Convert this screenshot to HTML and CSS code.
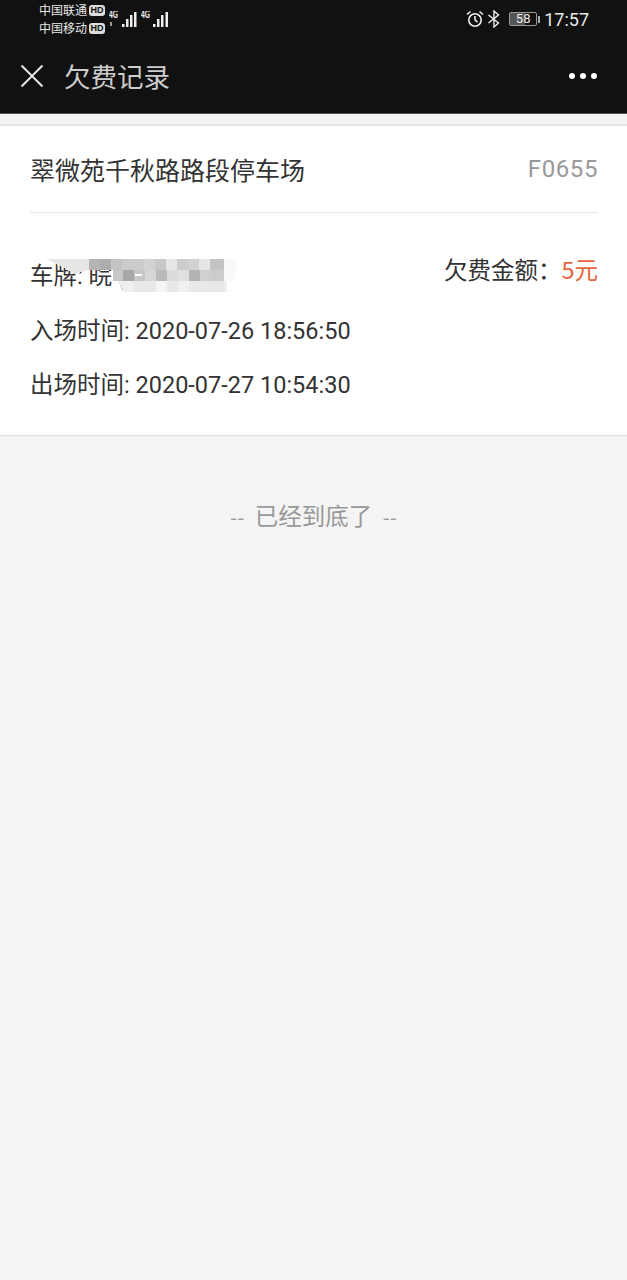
FILE: index.html
```html
<!DOCTYPE html>
<html lang="zh-CN">
<head>
  <meta charset="UTF-8" />
  <meta name="viewport" content="width=device-width, initial-scale=1.0"/>
  <title>欠费记录</title>
  <link rel="stylesheet" href="styles.css">
</head>
<body>
  <div class="top-bar">
    <div class="status-bar">
      <div class="carriers">
        <div class="carrier">中国联通<span class="hd">HD</span></div>
        <div class="carrier">中国移动<span class="hd">HD</span></div>
      </div>
      <svg class="signal" width="28" height="18" viewBox="0 0 28 18">
        <text x="0" y="7" class="net" textLength="9" lengthAdjust="spacingAndGlyphs">4G</text>
        <rect x="1" y="11" width="2" height="4" fill="#999"/>
        <rect x="13" y="13" width="2.500" height="3" fill="#eee"/>
        <rect x="17" y="8" width="2.500" height="8" fill="#eee"/>
        <rect x="21" y="4" width="2.500" height="12" fill="#eee"/>
        <rect x="25" y="1" width="2.500" height="15" fill="#eee"/>
      </svg>
      <svg class="signal" width="28" height="18" viewBox="0 0 28 18">
        <text x="0" y="7" class="net" textLength="9" lengthAdjust="spacingAndGlyphs">4G</text>
        <rect x="12" y="13" width="2.500" height="3" fill="#eee"/>
        <rect x="16" y="8" width="2.500" height="8" fill="#eee"/>
        <rect x="20" y="4" width="2.500" height="12" fill="#eee"/>
        <rect x="24.500" y="1" width="2.500" height="15" fill="#eee"/>
      </svg>
      <div class="status-right">
        <svg width="18" height="18" viewBox="0 0 18 18" fill="none" stroke="#eee" stroke-width="1.6">
          <circle cx="9" cy="10" r="6.200"/>
          <path d="M9 6V10l2.500 2.200M1 4.500l3.500-3M17 4.500l-3.500-3"/>
        </svg>
        <svg width="14" height="18" viewBox="0 0 14 18" fill="none" stroke="#eee" stroke-width="1.4">
          <path d="M1.500 5l10 8-4.500 4V1l4.500 4-10 8"/>
        </svg>
        <div class="battery"><span class="battery-level"></span><span class="battery-text">58</span></div>
        <span class="battery-tip"></span>
        <span class="clock">17:57</span>
      </div>
    </div>
    <div class="nav-bar">
      <svg class="close" width="24" height="24" viewBox="0 0 24 24" fill="none" stroke="#e8e8e8" stroke-width="1.9">
        <path d="M1.500 1.500l21 21M22.500 1.500l-21 21"/>
      </svg>
      <div class="nav-title">欠费记录</div>
      <div class="dots"><span></span><span></span><span></span></div>
    </div>
  </div>

  <div class="gap-strip"></div>

  <div class="record">
    <div class="record-head">
      <div class="lot-name">翠微苑千秋路路段停车场</div>
      <div class="lot-code">F0655</div>
    </div>
    <div class="record-body">
      <div class="row row-plate">
        <div class="plate">车牌: 皖</div>
        <div class="owed">欠费金额：<span class="amount">5元</span></div>
        <svg class="mosaic" width="192" height="38" viewBox="0 0 192 38" shape-rendering="crispEdges">
          <polygon points="0,4 42,4 42,15 28,19" fill="#e6e6e6"/>
          <polygon points="66,15 76,15 76,37" fill="#d0d0d0"/>
          <polygon points="71,26 180,26 180,37 78,37" fill="#efefef"/>
          <rect x="42" y="4" width="11" height="11" fill="#b4b4b4"/>
          <rect x="53" y="4" width="11" height="11" fill="#adadad"/>
          <rect x="64" y="4" width="11" height="11" fill="#c4c4c4"/>
          <rect x="75" y="4" width="11" height="11" fill="#cbcbcb"/>
          <rect x="86" y="4" width="11" height="11" fill="#cdcdcd"/>
          <rect x="97" y="4" width="11" height="11" fill="#d2d2d2"/>
          <rect x="108" y="4" width="11" height="11" fill="#c8c8c8"/>
          <rect x="119" y="4" width="11" height="11" fill="#e6e6e6"/>
          <rect x="130" y="4" width="11" height="11" fill="#cccccc"/>
          <rect x="141" y="4" width="11" height="11" fill="#d2d2d2"/>
          <rect x="152" y="4" width="11" height="11" fill="#e6e6e6"/>
          <rect x="163" y="4" width="14" height="11" fill="#c4c4c4"/>
          <rect x="177" y="4" width="12" height="11" fill="#f8f8f8"/>
          <rect x="66" y="15" width="10" height="11" fill="#c8c8c8"/>
          <rect x="76" y="15" width="11" height="11" fill="#a8a8a8"/>
          <rect x="87" y="15" width="11" height="11" fill="#c6c6c6"/>
          <rect x="98" y="15" width="11" height="11" fill="#d6d6d6"/>
          <rect x="109" y="15" width="11" height="11" fill="#bababa"/>
          <rect x="120" y="15" width="11" height="11" fill="#dcdcdc"/>
          <rect x="131" y="15" width="11" height="11" fill="#e0e0e0"/>
          <rect x="142" y="15" width="11" height="11" fill="#b4b4b4"/>
          <rect x="153" y="15" width="11" height="11" fill="#d0d0d0"/>
          <rect x="164" y="15" width="13" height="11" fill="#cccccc"/>
          <rect x="177" y="15" width="12" height="11" fill="#fafafa"/>
          <rect x="87" y="26" width="90" height="11" fill="#e8e8e8"/>
          <rect x="109" y="26" width="11" height="11" fill="#f4f4f4"/>
          <rect x="131" y="26" width="11" height="11" fill="#f0f0f0"/>
          <rect x="88" y="19" width="7" height="2" fill="#fff"/>
        </svg>
      </div>
      <div class="row">入场时间: 2020-07-26 18:56:50</div>
      <div class="row">出场时间: 2020-07-27 10:54:30</div>
    </div>
  </div>

  <div class="end-tip"><span class="dash">--</span>&nbsp; 已经到底了 &nbsp;<span class="dash">--</span></div>
</body>
</html>
```

FILE: styles.css
```css
html, body {
  margin: 0;
  padding: 0;
  height: 100%;
  background-color: #f4f4f4;
  font-family: "Noto Sans CJK SC", "Roboto", sans-serif;
  color: #333;
}

.top-bar {
  background-color: #111;
  height: 113px;
  color: #e8e8e8;
}

.status-bar {
  display: flex;
  align-items: flex-start;
  height: 38px;
  padding: 0 38px 0 39px;
}

.carriers {
  margin-top: 1px;
  margin-right: 4px;
}

.carrier {
  display: flex;
  align-items: center;
  gap: 2px;
  font-size: 12px;
  line-height: 18px;
  white-space: nowrap;
}

.hd {
  background-color: #ddd;
  color: #111;
  font-family: "Liberation Sans", sans-serif;
  font-size: 9px;
  font-weight: bold;
  line-height: 11px;
  width: 16px;
  text-align: center;
  border-radius: 3px;
}

.signal {
  margin-top: 11px;
  margin-right: 4px;
}

.net {
  font-family: "Liberation Sans", sans-serif;
  font-size: 10px;
  font-weight: bold;
  fill: #eee;
}

.status-right {
  display: flex;
  align-items: center;
  margin-left: auto;
  height: 38px;
  gap: 3px;
}

.battery {
  position: relative;
  width: 28px;
  height: 14px;
  border: 1px solid #999;
  border-radius: 2px;
  box-sizing: border-box;
  margin-left: 5px;
}

.battery-level {
  display: block;
  width: 58%;
  height: 100%;
  background-color: #555;
}

.battery-text {
  position: absolute;
  top: 0;
  left: 0;
  width: 100%;
  text-align: center;
  font-family: "Roboto", sans-serif;
  font-size: 13px;
  line-height: 12px;
  color: #eee;
}

.battery-tip {
  width: 2px;
  height: 7px;
  background-color: #aaa;
  margin-left: -2px;
}

.clock {
  font-family: "Roboto", sans-serif;
  font-size: 18px;
  margin-left: 1px;
}

.nav-bar {
  display: flex;
  align-items: center;
  height: 75px;
  padding: 0 30px 0 20px;
}

.close {
  margin-right: 20px;
}

.nav-title {
  font-size: 26.5px;
  line-height: 36px;
  color: #ccc;
}

.dots {
  display: flex;
  gap: 5px;
  margin-left: auto;
}

.dots span {
  width: 6px;
  height: 6px;
  border-radius: 50%;
  background-color: #fff;
}

.gap-strip {
  height: 10px;
  background-color: #f4f4f4;
  border-top: 1px solid #555;
  border-bottom: 2px solid #e6e6e6;
}

.record {
  background-color: #fff;
  border-bottom: 1px solid #e2e2e2;
  padding: 0 29px 0 30px;
  height: 309px;
}

.record-head {
  display: flex;
  align-items: center;
  justify-content: space-between;
  height: 86px;
  border-bottom: 1px solid #e5e5e5;
}

.lot-name {
  font-size: 25px;
  color: #333;
}

.lot-code {
  font-family: "Roboto", sans-serif;
  font-size: 24px;
  letter-spacing: 0.6px;
  color: #999;
}

.record-body {
  padding-top: 37px;
}

.row {
  display: flex;
  height: 54px;
  line-height: 54px;
  font-family: "Roboto", "Noto Sans CJK SC", sans-serif;
  font-size: 23.5px;
  color: #333;
  white-space: nowrap;
}

.row-plate {
  position: relative;
  justify-content: space-between;
}

.plate {
  margin-top: -1px;
}

.owed {
  font-family: "Noto Sans CJK SC", sans-serif;
  margin-top: -8px;
}

.amount {
  color: #e4643c;
}

.mosaic {
  position: absolute;
  left: 17px;
  top: 5px;
}

.end-tip {
  margin-top: 63px;
  text-align: center;
  font-size: 23.5px;
  line-height: 32px;
  color: #999;
}

.dash {
  font-size: 20px;
}
```
